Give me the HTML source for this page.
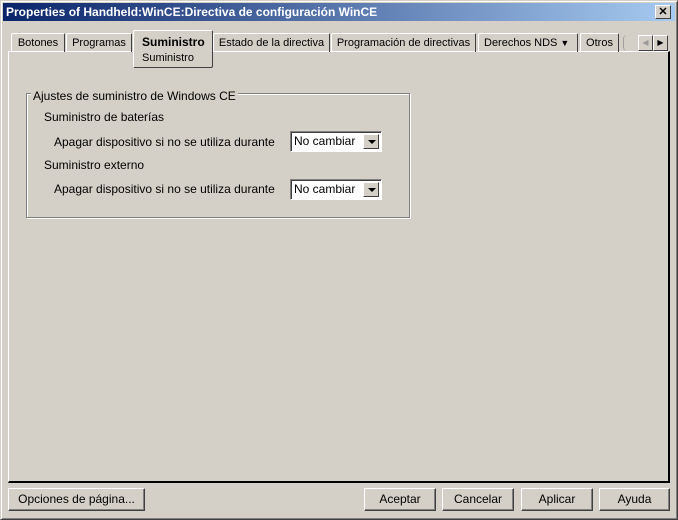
<!DOCTYPE html>
<html><head><style>
*{box-sizing:border-box;margin:0;padding:0}
body{width:678px;height:520px;background:#d4d0c8;font-family:"Liberation Sans",sans-serif;font-size:12px;color:#000;position:relative;overflow:hidden}
.a{position:absolute;white-space:nowrap}
.win{left:0;top:0;width:678px;height:520px;border:1px solid;border-color:#d4d0c8 #404040 #404040 #d4d0c8;box-shadow:inset 1px 1px #fff,inset -1px -1px #808080}
.title{left:3px;top:3px;width:672px;height:18px;background:linear-gradient(90deg,#0a246a,#a6caf0);color:#fff;font-weight:bold;font-size:12px;line-height:18px;padding-left:3px}
.x{left:655px;top:5px;width:16px;height:14px;background:#d4d0c8;border:1px solid;border-color:#fff #404040 #404040 #fff;font-size:11px;line-height:12px;text-align:center;color:#000;font-weight:bold}
.tab{top:33px;height:19px;border:1px solid;border-bottom:none;border-color:#fff #404040 #fff #fff;border-radius:2px 2px 0 0;line-height:18px;text-align:center;font-size:11px}
.btn{top:488px;height:23px;border:1px solid;border-color:#fff #404040 #404040 #fff;box-shadow:inset -1px -1px #808080;text-align:center;line-height:20px;font-size:12px}
.combo{left:290px;width:92px;height:21px;background:#fff;border:1px solid;border-color:#808080 #fff #fff #808080;box-shadow:inset 1px 1px #404040;line-height:19px;padding-left:3px;font-size:12px}
.combo b{position:absolute;right:2px;top:2px;width:16px;height:15px;background:#d4d0c8;border:1px solid;border-color:#fff #404040 #404040 #fff}
.combo b:after{content:"";position:absolute;left:4px;top:5px;border:4px solid transparent;border-top:4px solid #000;border-bottom:0}
</style></head><body>
<div class="a win"></div>
<div class="a title">Properties of Handheld:WinCE:Directiva de configuración WinCE</div>
<div class="a x">✕</div>
<div class="a" style="left:8px;top:51px;width:662px;height:432px;border-top:1px solid #fff;border-left:1px solid #fff;border-right:2px solid #000;border-bottom:2px solid #000"></div>
<div class="a tab" style="left:11px;width:54px">Botones</div>
<div class="a tab" style="left:66px;width:66px">Programas</div>
<div class="a tab" style="left:213px;width:117px">Estado de la directiva</div>
<div class="a tab" style="left:331px;width:145px">Programación de directivas</div>
<div class="a tab" style="left:478px;width:100px;text-align:left;padding-left:5px">Derechos NDS <span style="font-size:9px">&#9660;</span></div>
<div class="a tab" style="left:580px;width:39px">Otros</div>
<div class="a" style="left:623px;top:35px;width:5px;height:16px;border-left:1px solid #a0a0a0;border-radius:4px 0 0 4px"></div>
<div class="a" style="left:638px;top:35px;width:15px;height:16px;border:1px solid;border-color:#fff #404040 #404040 #fff;color:#999;font-size:8px;line-height:14px;text-align:center">◀</div>
<div class="a" style="left:653px;top:35px;width:15px;height:16px;border:1px solid;border-color:#fff #404040 #404040 #fff;font-size:8px;line-height:14px;text-align:center">▶</div>
<div class="a" style="left:133px;top:30px;width:80px;height:38px;background:#d4d0c8;border:1px solid;border-color:#fff #404040 #404040 #fff;border-radius:2px"></div>
<div class="a" style="left:142px;top:35px;font-weight:bold;font-size:12px">Suministro</div>
<div class="a" style="left:142px;top:52px;font-size:11px">Suministro</div>
<div class="a" style="left:26px;top:93px;width:384px;height:125px;border:1px solid #808080;box-shadow:1px 1px #fff,inset 1px 1px #fff"></div>
<div class="a" style="left:31px;top:89px;background:#d4d0c8;padding:0 2px;font-size:12px">Ajustes de suministro de Windows CE</div>
<div class="a" style="left:44px;top:110px">Suministro de baterías</div>
<div class="a" style="left:54px;top:135px">Apagar dispositivo si no se utiliza durante</div>
<div class="a combo" style="top:131px">No cambiar<b></b></div>
<div class="a" style="left:44px;top:158px">Suministro externo</div>
<div class="a" style="left:54px;top:182px">Apagar dispositivo si no se utiliza durante</div>
<div class="a combo" style="top:179px">No cambiar<b></b></div>
<div class="a btn" style="left:8px;width:137px">Opciones de página...</div>
<div class="a btn" style="left:364px;width:72px">Aceptar</div>
<div class="a btn" style="left:442px;width:72px">Cancelar</div>
<div class="a btn" style="left:521px;width:72px">Aplicar</div>
<div class="a btn" style="left:599px;width:71px">Ayuda</div>
</body></html>
